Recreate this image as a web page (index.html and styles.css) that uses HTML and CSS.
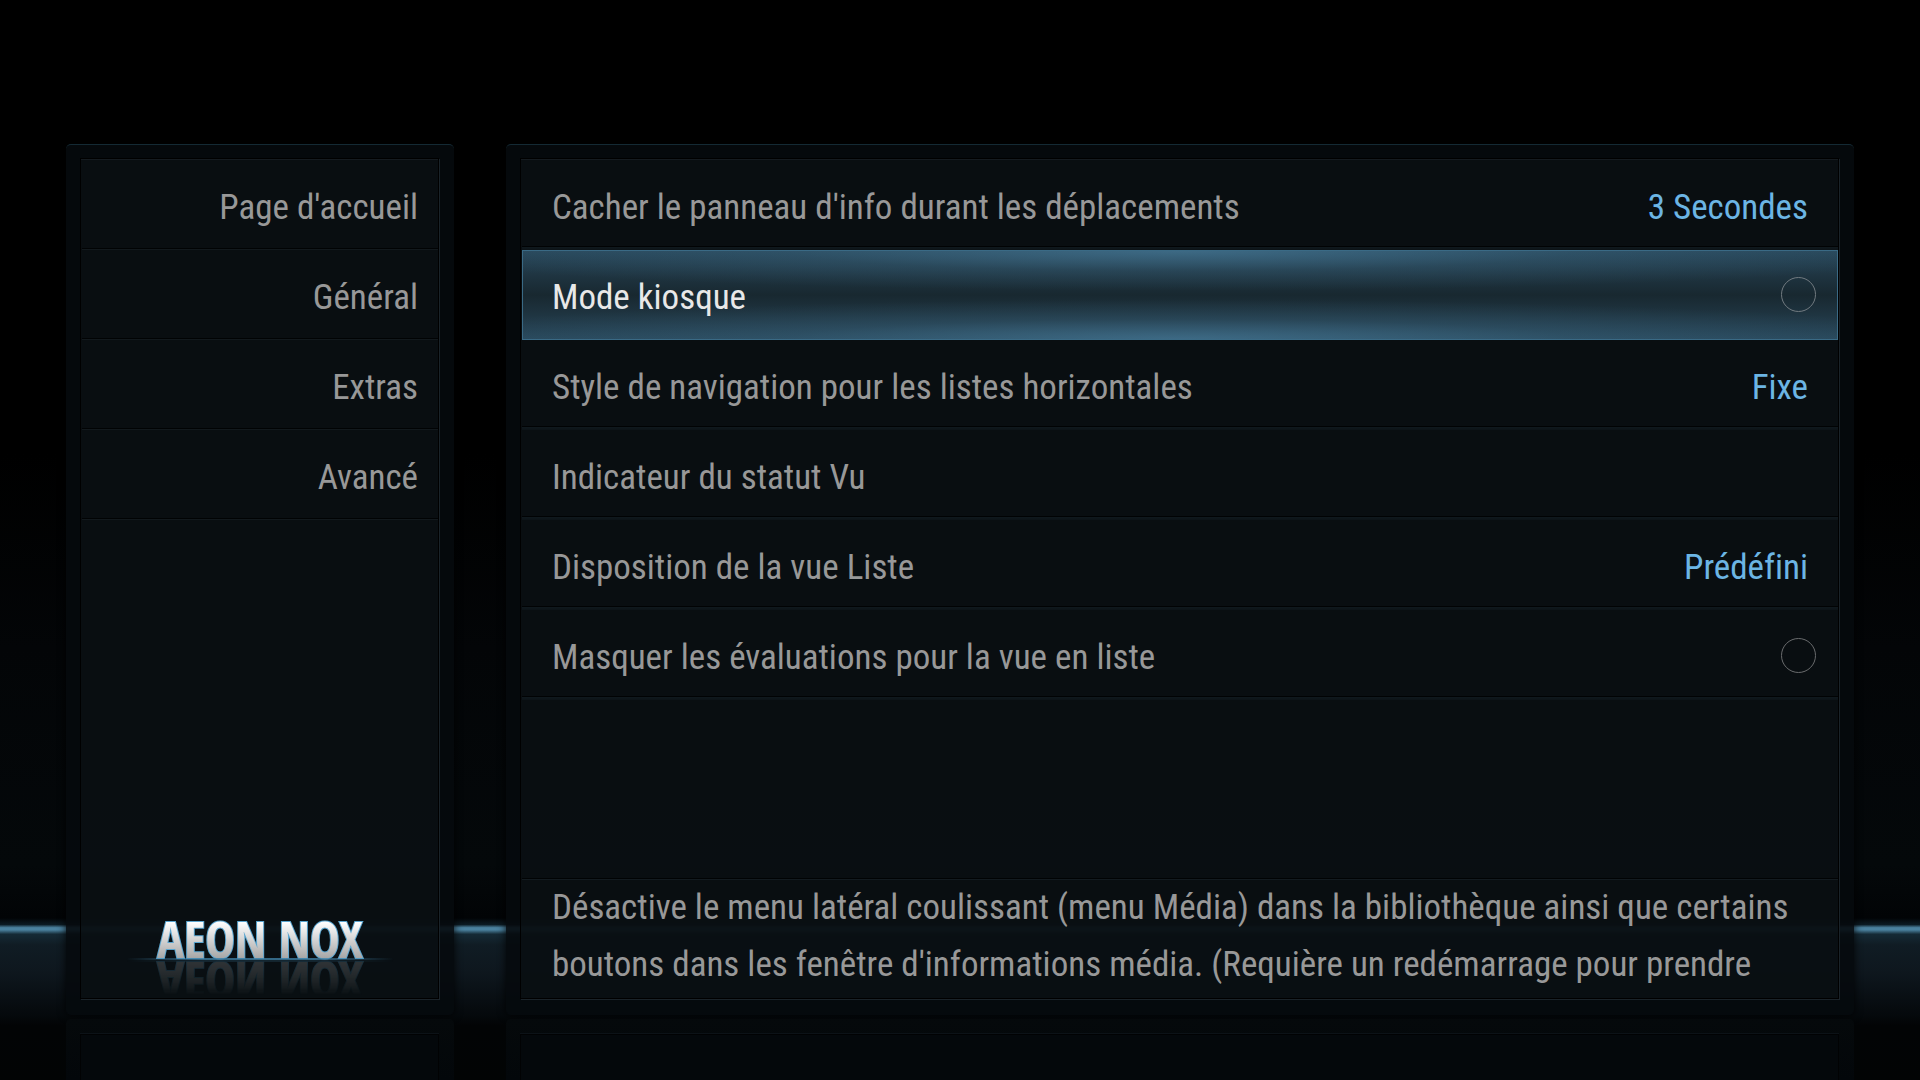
FILE: index.html
```html
<!DOCTYPE html>
<html lang="fr">
<head>
<meta charset="utf-8">
<title>Aeon Nox - Paramètres</title>
<link rel="stylesheet" href="styles.css">
</head>

<body>
	<div class="page">
		<aside class="panel">
			<div class="inner">
				<nav class="menu">
					<a href="#accueil">Page d'accueil</a>
					<a href="#general">Général</a>
					<a href="#extras">Extras</a>
					<a href="#avance">Avancé</a>
				</nav>
				<svg class="logo" viewBox="0 0 280 54" role="img" aria-label="Aeon Nox">
					<defs>
						<linearGradient id="metal" x1="0" y1="16" x2="0" y2="54" gradientUnits="userSpaceOnUse">
							<stop offset="0" stop-color="#fff"/>
							<stop offset="1" stop-color="#a2a2a2"/>
						</linearGradient>
						<linearGradient id="flare">
							<stop offset="0" stop-color="#3f7ea3" stop-opacity="0"/>
							<stop offset=".3" stop-color="#3f7ea3"/>
							<stop offset=".7" stop-color="#3f7ea3"/>
							<stop offset="1" stop-color="#3f7ea3" stop-opacity="0"/>
						</linearGradient>
					</defs>
					<text class="word" x="140" y="52" fill="url(#metal)">AEON NOX</text>
					<rect x="6" y="52" width="268" height="2" fill="url(#flare)" opacity=".8"/>
				</svg>
			</div>
		</aside>

		<main class="panel">
			<div class="inner">
				<div class="settings">
					<button type="button" class="row"><span>Cacher le panneau d'info durant les déplacements</span><span class="value">3 Secondes</span></button>
					<label class="row focus">Mode kiosque<input type="checkbox"></label>
					<button type="button" class="row"><span>Style de navigation pour les listes horizontales</span><span class="value">Fixe</span></button>
					<button type="button" class="row"><span>Indicateur du statut Vu</span></button>
					<button type="button" class="row"><span>Disposition de la vue Liste</span><span class="value">Prédéfini</span></button>
					<label class="row">Masquer les évaluations pour la vue en liste<input type="checkbox"></label>
				</div>
				<p class="help">Désactive le menu latéral coulissant (menu Média) dans la bibliothèque ainsi que certains boutons dans les fenêtre d'informations média. (Requière un redémarrage pour prendre</p>
			</div>
		</main>

		<div class="mirror"><div></div></div>
		<div class="mirror"><div></div></div>
	</div>
</body>
</html>
```
FILE: styles.css
```css
*{ padding:0; margin:0; box-sizing:border-box;}
body{ background:#000; color:#989898; font:35px "Roboto Condensed", Roboto, sans-serif; font-variant-ligatures:none;}

/* horizon */
.page{ display:grid; grid-template-columns:388px 1fr; grid-template-rows:1fr 61px; gap:4px 52px; min-height:100vh; padding:144px 66px 0; overflow:hidden; background:linear-gradient(#000 42%, #030507 60%, #04080a 80%, #020406 85%, #0b1a22 85.6%, #4a819e 85.9%, #4a819e 86.1%, #152a35 86.5%, #101c24 87.5%, #0e171e 90%, #05090c 94%, #020405 95%, #020404);}

/* panneaux */
.panel{ display:flex; padding:13px 15px 16px 14px; border-top:1px solid #142a34; border-radius:5px; background:rgba(5,10,13,0.9); box-shadow:0 0 8px rgba(0,0,0,0.9);}
.inner{ flex:1; display:flex; flex-direction:column; justify-content:space-between; padding:1px 0 0 1px; border:1px solid #000; background:rgba(12,18,22,0.6); box-shadow:1px 1px 0 #1a2329, inset 0 1px 0 #151b20;}

.menu a{ display:block; height:90px; padding:4px 20px 0 0; line-height:88px; text-align:right; color:#989898; text-decoration:none; background:linear-gradient(#010304 1px, #12191d 1px) bottom / 100% 2px no-repeat;}

.row{ display:flex; justify-content:space-between; align-items:center; width:100%; height:90px; padding:5px 30px 0 30px; border:0; font:inherit; color:#989898; text-align:left; background:linear-gradient(#010304 1px, #10191e 1px, #0c1317) bottom / 100% 4px no-repeat;}
.row .value{ color:#6cb5e4;}
.row input{ appearance:none; width:35px; height:35px; margin:-5px -8px 0 0; border:1px solid #696b6d; border-radius:50%;}
.focus{ color:#e8e8e8; border:1px solid #3a6a85; padding:4px 29px 0 29px; background:radial-gradient(ellipse 60% 45% at 50% 0, rgba(72,124,155,0.65), rgba(72,124,155,0.2) 50%, transparent), radial-gradient(ellipse 60% 45% at 50% 100%, rgba(72,124,155,0.65), rgba(72,124,155,0.2) 50%, transparent), linear-gradient(#28475a, #1e333f 30%, #182830 50%, #1e333f 70%, #28475a);}
.focus input{ border-color:#717a80;}

.help{ height:120px; padding:1px 30px 0; line-height:57px; background:linear-gradient(#010304 1px, #131b20 1px) top / 100% 2px no-repeat;}

/* logo */
.logo{ display:block; width:280px; height:54px; margin:0 auto 38px; overflow:visible; -webkit-box-reflect:below 0 linear-gradient(transparent 35%, rgba(0,0,0,0.25));}
.word{ font:bold 50px "Open Sans Condensed", "Roboto Condensed", sans-serif; text-anchor:middle; stroke:#5aa5cf; stroke-width:2px; paint-order:stroke;}

/* reflet au sol */
.mirror{ padding:15px 15px 0 14px; border-radius:5px 5px 0 0; background:linear-gradient(#05090b, #03070a);}
.mirror div{ height:100%; border:1px solid #010203; border-bottom:0; background:#04080b; box-shadow:0 -1px 0 #0c1217;}
```
